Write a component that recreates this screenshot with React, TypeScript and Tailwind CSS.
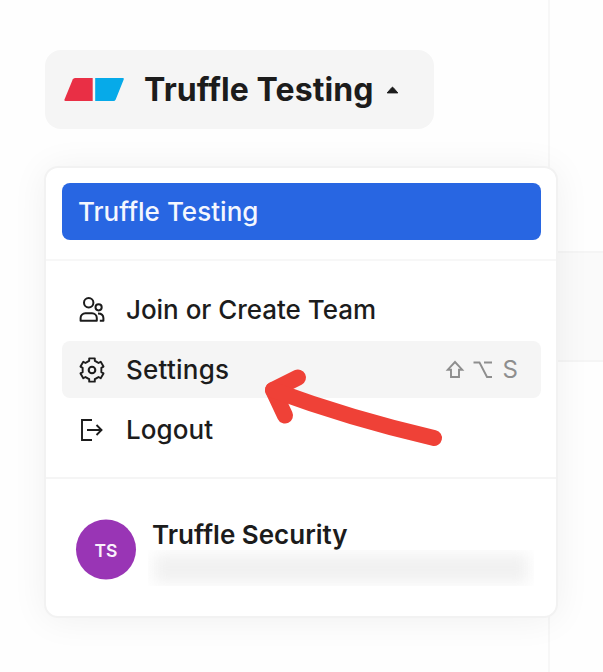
import type { ReactNode } from "react";

function TeamIcon() {
  return (
    <svg width="26" height="26" viewBox="0 0 26 26" fill="none" stroke="#1c1c1c" strokeWidth="2" strokeLinejoin="round">
      <circle cx="9.7" cy="5.8" r="4.7" />
      <circle cx="19.6" cy="10.3" r="3.1" />
      <path d="M1.6 23.8v-2.8a4.8 4.8 0 0 1 4.8-4.8h6.6a4.8 4.8 0 0 1 4.8 4.8v2.8z" />
      <path d="M19 16.4c3.2 0 5.4 1.8 5.4 4.6v2.8h-3.6" />
    </svg>
  );
}

// Six flat-topped teeth, each joined to the next by a shallow notch.
const gearPoints = [0, 60, 120, 180, 240, 300]
  .flatMap((tooth) =>
    [
      [-24, 9.4],
      [-17, 9.6],
      [-13.5, 12],
      [13.5, 12],
      [17, 9.6],
      [24, 9.4],
    ].map(([offset, radius]) => {
      const angle = ((tooth + offset - 90) * Math.PI) / 180;
      return `${(13 + radius * Math.cos(angle)).toFixed(2)},${(13 + radius * Math.sin(angle)).toFixed(2)}`;
    }),
  )
  .join(" ");

function GearIcon() {
  return (
    <svg width="26" height="26" viewBox="0 0 26 26" fill="none" stroke="#1c1c1c" strokeWidth="1.9" strokeLinejoin="round">
      <polygon points={gearPoints} />
      <circle cx="13" cy="13" r="3.3" strokeWidth="2.1" />
    </svg>
  );
}

function LogoutIcon() {
  return (
    <svg width="26" height="26" viewBox="0 0 26 26" fill="none" stroke="#1c1c1c" strokeWidth="1.9">
      <path d="M13 3H3v20h10" />
      <path d="M8 13h14.5M17.5 8l5 5-5 5" />
    </svg>
  );
}

function Item({ icon, label, children, active }: { icon: ReactNode; label: ReactNode; children?: ReactNode; active?: boolean }) {
  return (
    <div className={`flex items-center rounded-lg pl-4 pr-[23px] ${active ? "h-[57px] bg-[#f5f5f5]" : "h-[63px]"}`}>
      <span className="flex w-[48px] shrink-0 pl-px">{icon}</span>
      <span className="grow text-[26px] font-medium text-[#1c1c1c]">{label}</span>
      {children}
    </div>
  );
}

export default function App() {
  return (
    <div className="relative flex h-[672px] w-[603px] overflow-hidden bg-[#fefefe] font-['Inter',sans-serif]">
      <aside className="w-[550px] shrink-0 border-r-2 border-[#f7f7f7] pl-[45px] pt-[50px]">
        <button className="flex h-[79px] w-[389px] items-center rounded-2xl bg-[#f5f5f5] pl-[19px]">
          <svg width="60" height="25" viewBox="0 0 60 25">
            <path d="M11 1H28.7V24H1.5Q0 24 .5 22.5L8.7 2.5Q9.4 1 11 1Z" fill="#e92f45" />
            <path d="M31.2 1H58.8Q60.3 1 59.7 2.5L51.7 22.5Q51 24 49.5 24H31.2Z" fill="#06aae9" />
          </svg>
          <span className="ml-[20px] whitespace-nowrap text-[32px] font-bold tracking-[0.08px] text-[#1c1c1c]">Truffle Testing</span>
          <svg className="ml-[12px]" width="13" height="8" viewBox="0 0 13 8">
            <path d="M1.2 6.9L5.9 1.5Q6.5 1 7.1 1.5L11.8 6.9Z" fill="#1c1c1c" stroke="#1c1c1c" strokeLinejoin="round" />
          </svg>
        </button>
      </aside>
      <main className="grow pt-[251px]">
        <div className="h-[111px] border-y-2 border-[#f5f5f5] bg-[#fafafa]" />
      </main>

      <div className="absolute left-[44px] top-[166px] h-[452px] w-[514px] rounded-[14px] border-2 border-[#f2f2f2] bg-white shadow-[0_2px_36px_rgba(0,0,0,0.06)]">
        <div className="pl-4 pr-[15px] pt-[15px]">
          <div className="flex h-[57px] items-center rounded-lg bg-[#2866e2] pl-[16px] text-[26px] font-medium text-[#f4f7fe]">
            <span className="tracking-[0.03px]">Truffle Testing</span>
          </div>
        </div>
        <div className="mt-[19px] h-[2px] bg-[#f7f7f7]" />
        <div className="pl-4 pr-[15px] pt-[17px]">
          <Item icon={<TeamIcon />} label={<span className="tracking-[-0.03px]">Join or Create Team</span>} />
          <Item icon={<GearIcon />} label={<span className="tracking-[0.25px]">Settings</span>} active>
            <span className="flex items-center text-[24px] text-[#8e8e8e]">
              <svg width="48" height="20" viewBox="0 0 48 20" fill="none" stroke="#8e8e8e" strokeWidth="1.9">
                <path d="M10 2L2.8 9.7H6V17H14V9.7H17.2Z" />
                <path d="M28.5 2.5H34.5L42 17H47M39 2.5H47" />
              </svg>
              <span className="ml-[10px]">S</span>
            </span>
          </Item>
          <Item icon={<LogoutIcon />} label={<span className="tracking-[0.1px]">Logout</span>} />
        </div>
        <div className="mt-[16px] h-[2px] bg-[#f5f5f5]" />
        <div className="flex pl-[30px] pt-[40px]">
          <div className="flex size-[60px] translate-y-[0.5px] items-center justify-center rounded-full bg-[#9935b5] pt-[2px] text-[17.5px] font-semibold text-[#faf2fc]">TS</div>
          <div className="ml-[12px]">
            <div className="h-[31px] pl-[4px] text-[26px] font-semibold leading-[31px] text-[#1c1c1c]">Truffle Security</div>
            <div className="flex h-[36px] w-[386px] items-center overflow-hidden">
              <div className="ml-[6px] h-[29px] w-[374px] bg-[#f1f1f1] blur-[7px]" />
            </div>
          </div>
        </div>
      </div>

      <svg className="absolute left-[255px] top-[360px]" width="200" height="95" viewBox="255 360 200 95" fill="none" stroke="#ef4137" strokeWidth="16" strokeLinecap="round" strokeLinejoin="round">
        <path d="M298 377.5L273 390L285 415.5" />
        <path d="M273 390Q350 418.5 434 438" />
      </svg>
    </div>
  );
}
